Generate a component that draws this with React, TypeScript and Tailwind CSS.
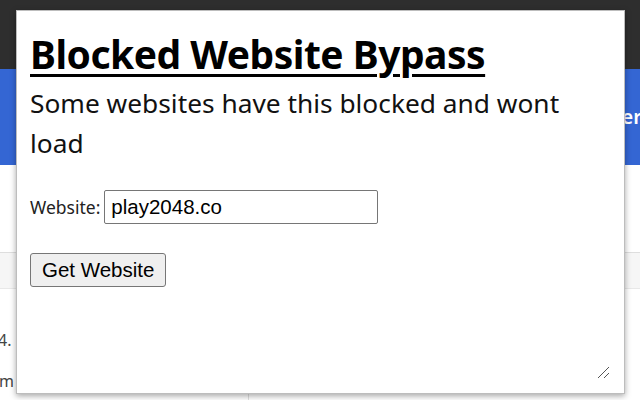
import React from "react";

export default function App() {
  return (
    <div className="relative w-[640px] h-[400px] overflow-hidden bg-white font-['Noto_Sans',sans-serif]">
      {/* page behind the popup */}
      <div className="flex flex-col h-full">
        <div className="h-[69px] bg-[#2e2e2e]" />
        <div className="h-[96px] bg-[#3466d3] flex items-center justify-end">
          <span className="text-white text-[20px] font-semibold mr-[-2px]">Over</span>
        </div>
        <div className="h-[88px] bg-white border-b border-[#dedede]" />
        <div className="h-[36px] bg-[#f6f6f6] border-b border-[#e8e8e8]" />
        <div className="flex flex-1">
          <div className="w-[249px] border-r border-[#e0e0e0] text-[16px] text-[#444]">
            <div className="mt-[39px] -ml-[2px]">4.</div>
            <div className="mt-[17px] -ml-[1px]">m</div>
          </div>
          <div className="flex-1" />
        </div>
      </div>

      {/* extension popup */}
      <div className="absolute left-[16px] top-[10px] w-[609px] h-[384px] bg-white border border-[#bdbdbd] shadow-[0_2px_6px_rgba(0,0,0,0.35)]">
        <div className="pl-[13px] pt-[20px]">
          <h1 className="text-[39px] leading-[46px] font-bold underline decoration-[3px] underline-offset-[5px] text-black tracking-[-0.5px]">
            Blocked Website Bypass
          </h1>
          <p className="mt-[6px] text-[26.3px] leading-[40px] text-[#111] w-[560px]">
            Some websites have this blocked and wont load
          </p>
          <div className="flex items-center mt-[27px]">
            <label className="text-[17.5px] text-[#222] mr-[4px]">Website:</label>
            <input
              defaultValue="play2048.co"
              className="w-[274px] h-[34px] border border-[#767676] rounded-[2px] px-[6px] text-[20.5px] text-black font-['Liberation_Sans',sans-serif] outline-none"
            />
          </div>
          <button className="mt-[29px] h-[34px] px-[11px] bg-[#efefef] border border-[#767676] rounded-[3px] text-[20.5px] leading-[32px] text-black font-['Liberation_Sans',sans-serif]">
            Get Website
          </button>
        </div>
        <svg className="absolute right-[14px] bottom-[14px]" width="14" height="14" viewBox="0 0 14 14">
          <path d="M2 13 L13 2 M8 13 L13 8" stroke="#555" strokeWidth="1" />
        </svg>
      </div>
    </div>
  );
}
